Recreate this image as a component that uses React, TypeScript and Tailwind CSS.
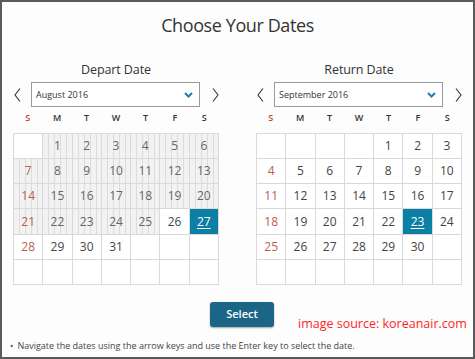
import React from "react";

type Cell = { day: number | null; disabled?: boolean; selected?: boolean };

function buildMonth(startDow: number, days: number, disabledUpTo: number, selected: number): Cell[] {
  const cells: Cell[] = [];
  for (let i = 0; i < startDow; i++) cells.push({ day: null });
  for (let d = 1; d <= days; d++) cells.push({ day: d, disabled: d <= disabledUpTo, selected: d === selected });
  while (cells.length < 42) cells.push({ day: null });
  return cells;
}

const Chevron = ({ dir }: { dir: "left" | "right" }) => (
  <svg width="7" height="14" viewBox="0 0 7 14" className="shrink-0">
    {dir === "left" ? (
      <polyline points="6,0.5 1,7 6,13.5" fill="none" stroke="#333" strokeWidth="1.1" />
    ) : (
      <polyline points="1,0.5 6,7 1,13.5" fill="none" stroke="#333" strokeWidth="1.1" />
    )}
  </svg>
);

const Down = () => (
  <svg width="9" height="6" viewBox="0 0 9 6">
    <polyline points="1,1 4.5,4.5 8,1" fill="none" stroke="#1a82ad" strokeWidth="2" />
  </svg>
);

function Calendar({ label, month, cells }: { label: string; month: string; cells: Cell[] }) {
  const heads = ["S", "M", "T", "W", "T", "F", "S"];
  return (
    <div className="w-[206px] flex flex-col">
      <div className="h-[20px] flex items-center justify-center text-[12.5px] text-[#333] tracking-[-0.1px]">{label}</div>
      <div className="mt-[2px] flex items-center h-[25px]">
        <div className="ml-[1px]"><Chevron dir="left" /></div>
        <div className="ml-[10px] w-[169px] h-[25px] border border-[#9a9a9a] bg-white flex items-center justify-between pl-[4px] pr-[6px]">
          <span className="text-[9px] text-[#333]">{month}</span>
          <Down />
        </div>
        <div className="ml-auto"><Chevron dir="right" /></div>
      </div>
      <div className="grid grid-cols-7 h-[26px] items-center pb-[4px]">
        {heads.map((h, i) => (
          <div key={i} className={`text-center text-[9px] font-semibold ${i === 0 ? "text-[#b4472a]" : "text-[#333]"}`}>{h}</div>
        ))}
      </div>
      <div className="grid grid-cols-7 gap-px bg-[#d9d9d9] border border-[#d9d9d9]">
        {cells.map((c, i) => {
          const sunday = i % 7 === 0;
          let cls = "h-[24.17px] flex items-center justify-center text-[12px] ";
          if (c.selected) cls += "bg-[#0c7fa5] text-white underline underline-offset-2";
          else if (c.disabled)
            cls += "bg-[repeating-linear-gradient(90deg,#f2f2f2_0px,#f2f2f2_5px,#dcdcdc_5px,#dcdcdc_6px)] " + (sunday ? "text-[#b8604a]" : "text-[#666]");
          else cls += "bg-white " + (sunday ? "text-[#b8604a]" : "text-[#444]");
          return (
            <div key={i} className={cls}>
              {c.day ?? ""}
            </div>
          );
        })}
      </div>
    </div>
  );
}

export default function App() {
  const aug = buildMonth(1, 31, 25, 27);
  const sep = buildMonth(4, 30, 0, 23);
  return (
    <div className="w-[475px] h-[359px] border-2 border-[#5a5a5a] bg-[#fdfdfd] relative flex flex-col" style={{ fontFamily: '"Open Sans", "Noto Sans", sans-serif' }}>
      <div className="h-[58px] pt-[10px] flex justify-center text-[18px] tracking-[-0.4px] text-[#333] leading-[26px]">Choose Your Dates</div>
      <div className="px-[11px] flex justify-between">
        <Calendar label="Depart Date" month="August 2016" cells={aug} />
        <Calendar label="Return Date" month="September 2016" cells={sep} />
      </div>
      <div className="mt-[17px] flex justify-center pl-[9px]">
        <button className="w-[64px] h-[25px] rounded-[3px] bg-[#1b6587] text-white text-[11px] font-semibold shadow-[0_1px_2px_rgba(0,0,0,0.35)]">Select</button>
      </div>
      <div className="absolute left-[296px] top-[313px] whitespace-nowrap text-[12.5px] text-[#ff2424] leading-[18px]">image source: koreanair.com</div>
      <div className="mt-[12px] pl-[8px] flex items-center text-[9px] leading-[13px] text-[#444] whitespace-nowrap">
        <span className="mr-[4px]">•</span>
        <span>Navigate the dates using the arrow keys and use the Enter key to select the date.</span>
      </div>
    </div>
  );
}
